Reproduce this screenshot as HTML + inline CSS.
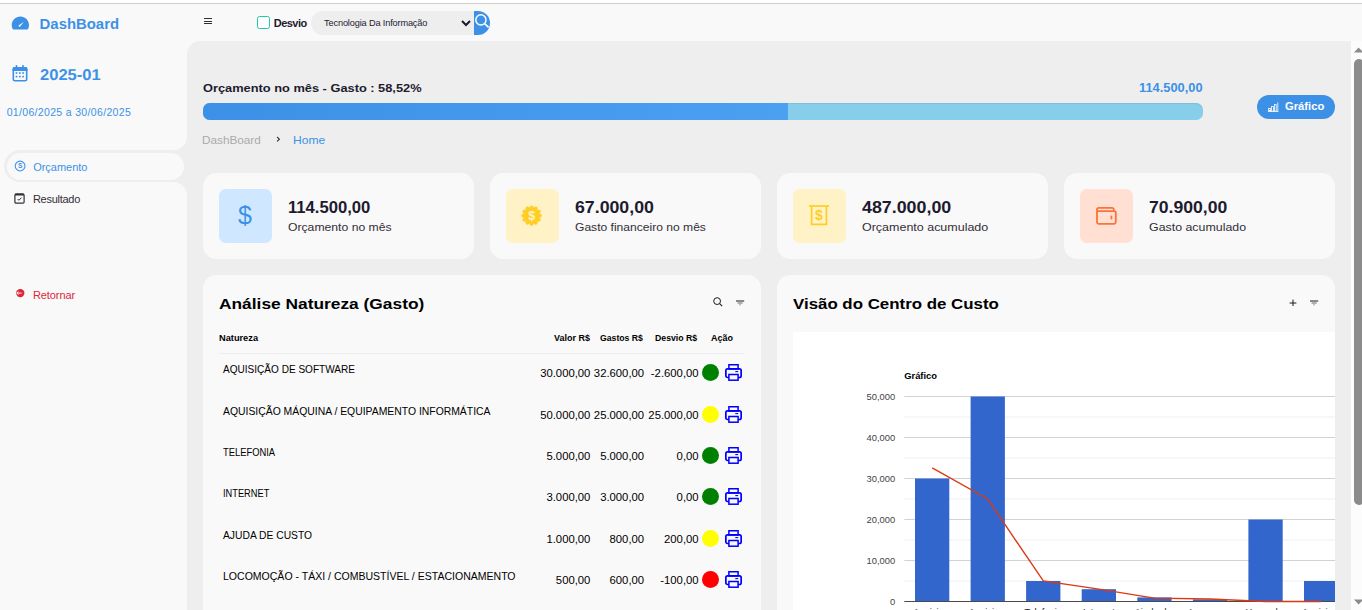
<!DOCTYPE html>
<html lang="pt-br">
<head>
<meta charset="utf-8">
<title>DashBoard</title>
<style>
*{box-sizing:border-box;margin:0;padding:0}
html,body{width:1362px;height:610px;overflow:hidden;background:#fff}
body{position:relative;font-family:"Liberation Sans",sans-serif;color:#342E37}
.a{position:absolute}
.t{position:absolute;white-space:nowrap;line-height:1;transform-origin:0 0}
.gp{text-rendering:geometricPrecision}
.card{position:absolute;background:#F9F9F9;border-radius:13.3px}
.dot{position:absolute;width:17px;height:17px;border-radius:50%}
</style>
</head>
<body>


<div class="a" style="left:0px;top:3px;width:1362px;height:1px;background:#CDCFCE;"></div>
<div class="a" style="left:0px;top:4px;width:1362px;height:606px;background:#F9F9F9;"></div>
<div class="a" style="left:187px;top:41px;width:1164px;height:569px;background:#EEEEEE;border-top-left-radius:13.3px"></div>
<div class="a" style="left:1351px;top:41px;width:11px;height:569px;background:#FCFCFC;"></div>
<svg class="a" style="left:1354px;top:47px" width="8" height="6" viewBox="0 0 8 6"><path d="M0 5.4 L4.6 0.4 L9.2 5.4 Z" fill="#8B8B8B"/></svg>
<div class="a" style="left:1354px;top:59px;width:10px;height:446px;background:#8B8B8B;border-radius:5px"></div>
<svg class="a" style="left:1354px;top:598.6px" width="8" height="6" viewBox="0 0 8 6"><path d="M0 0.6 L4.6 5.6 L9.2 0.6 Z" fill="#8B8B8B"/></svg>
<svg class="a" style="left:9.77px;top:12.54px" width="20.76" height="20.76" viewBox="0 0 24 24"><path d="M12 4C6.486 4 2 8.486 2 14a9.89 9.89 0 0 0 1.051 4.445c.17.34.516.555.895.555h16.107c.379 0 .726-.215.896-.555A9.89 9.89 0 0 0 22 14c0-5.514-4.486-10-10-10z" fill="#3C91E6"/><path d="M10.3 15.7a1 1 0 0 1 0-1.4l5.8-4.3-4.4 5.7a1 1 0 0 1-1.4 0z" fill="#F9F9F9"/></svg>
<div class="t" style="left:39.60px;top:17.00px;font-size:14.9px;color:#3C91E6;font-weight:700;">DashBoard</div>
<svg class="a" style="left:12.4px;top:65px" width="16" height="17" viewBox="0 0 16 17"><rect x="1.3" y="2.9" width="13.4" height="12.9" rx="1.6" fill="none" stroke="#3C91E6" stroke-width="1.6"/><path d="M0.5 6 V3.9 a1.8 1.8 0 0 1 1.8 -1.8 H13.7 a1.8 1.8 0 0 1 1.8 1.8 V6 Z" fill="#3C91E6"/><rect x="3.7" y="0.1" width="1.6" height="3" fill="#3C91E6"/><rect x="10.2" y="0.1" width="1.6" height="3" fill="#3C91E6"/><g fill="#3C91E6"><rect x="3.65" y="7.2" width="1.7" height="1.6"/><rect x="6.95" y="7.2" width="1.7" height="1.6"/><rect x="10.25" y="7.2" width="1.7" height="1.6"/><rect x="3.65" y="10.8" width="1.7" height="1.6"/><rect x="6.95" y="10.8" width="1.7" height="1.6"/><rect x="10.25" y="10.8" width="1.7" height="1.6"/></g></svg>
<div class="t gp" style="left:40.30px;top:68.00px;font-size:15.6px;color:#3C91E6;font-weight:700;transform:scaleX(1.06);">2025-01</div>
<div class="t" style="left:6.70px;top:107.00px;font-size:10.5px;color:#3C91E6;letter-spacing:0.33px;">01/06/2025 a 30/06/2025</div>
<div class="a" style="left:174px;top:137px;width:13px;height:13.3px;background:#EEEEEE;"></div>
<div class="a" style="left:160.4px;top:123.4px;width:26.6px;height:26.6px;background:#F9F9F9;border-radius:50%"></div>
<div class="a" style="left:174px;top:181.7px;width:13px;height:13.3px;background:#EEEEEE;"></div>
<div class="a" style="left:160.4px;top:182px;width:26.6px;height:26.6px;background:#F9F9F9;border-radius:50%"></div>
<div class="a" style="left:4px;top:150px;width:183px;height:32px;background:#EEEEEE;border-radius:16px 0 0 16px"></div>
<div class="a" style="left:6.7px;top:152.8px;width:177.6px;height:27px;background:#F9F9F9;border-radius:13.5px"></div>
<svg class="a" style="left:14px;top:160.3px" width="12" height="12" viewBox="0 0 12 12"><circle cx="6.1" cy="6" r="4.9" fill="none" stroke="#3C91E6" stroke-width="1.05"/><text x="6.1" y="8.3" font-size="6.6" font-weight="700" text-anchor="middle" fill="#3C91E6" font-family="Liberation Sans, sans-serif">S</text></svg>
<div class="t" style="left:33.20px;top:162.00px;font-size:11px;color:#3C91E6;letter-spacing:-0.02px;">Orçamento</div>
<svg class="a" style="left:14.3px;top:193px" width="11" height="11" viewBox="0 0 11 11"><rect x="0.9" y="1.2" width="9.2" height="9" rx="1.2" fill="none" stroke="#342E37" stroke-width="1.2"/><rect x="0.9" y="0.5" width="9.2" height="1.9" rx="0.7" fill="#342E37"/><path d="M3.6 6 L4.9 7.3 L7.4 4.7" fill="none" stroke="#342E37" stroke-width="1"/></svg>
<div class="t" style="left:32.90px;top:194.00px;font-size:11px;color:#342E37;letter-spacing:-0.26px;">Resultado</div>
<svg class="a" style="left:16px;top:289px" width="9" height="9" viewBox="0 0 9 9"><circle cx="4.3" cy="4.1" r="4.15" fill="#DC2838"/><path d="M0.9 4.1 H5.6 M2.5 2.6 L0.9 4.1 L2.5 5.6" stroke="#fff" stroke-width="0.9" fill="none"/></svg>
<div class="t" style="left:33.00px;top:290.00px;font-size:11px;color:#DC2838;letter-spacing:-0.1px;">Retornar</div>
<div class="a" style="left:204.4px;top:18px;width:7.9px;height:1.2px;background:#342E37;"></div>
<div class="a" style="left:204.4px;top:20.6px;width:7.9px;height:1.2px;background:#342E37;"></div>
<div class="a" style="left:204.4px;top:23.2px;width:7.9px;height:1.2px;background:#342E37;"></div>
<div class="a" style="left:257px;top:16px;width:13.2px;height:13px;background:#fff;border:1.3px solid #1fc9a1;border-radius:2.5px"></div>
<div class="t" style="left:273.80px;top:18.00px;font-size:11px;color:#1d1b2e;font-weight:700;letter-spacing:-0.54px;">Desvio</div>
<div class="a" style="left:311px;top:11px;width:163px;height:24px;background:#EEEEEE;border-radius:12px 0 0 12px"></div>
<div class="t" style="left:324.10px;top:19.00px;font-size:9.2px;color:#1d1b2e;letter-spacing:-0.15px;">Tecnologia Da Informação</div>
<svg class="a" style="left:461px;top:20px" width="10" height="7" viewBox="0 0 10 7"><path d="M1 1 L5 5 L9 1" fill="none" stroke="#1d1b2e" stroke-width="2"/></svg>
<div class="a" style="left:474px;top:11px;width:16.3px;height:24px;background:#3C91E6;border-radius:0 12px 12px 0;overflow:hidden"><svg class="a" style="left:0;top:0" width="17" height="24" viewBox="0 0 17 24"><circle cx="6.9" cy="8.9" r="5.1" fill="none" stroke="#fff" stroke-width="1.5"/><path d="M10.6 12.6 L14.6 16.4" stroke="#fff" stroke-width="1.6"/></svg></div>
<div class="t" style="left:202.90px;top:83.00px;font-size:11.5px;color:#1d1b2e;font-weight:700;transform:scaleX(1.114);">Orçamento no mês - Gasto : 58,52%</div>
<div class="t" style="left:1139.10px;top:82.00px;font-size:12px;color:#3C91E6;font-weight:700;transform:scaleX(1.07);">114.500,00</div>
<div class="a" style="left:203px;top:103px;width:1000px;height:17px;border-radius:6.7px;background:#87CEEB;overflow:hidden;box-shadow:inset 0 1px 1px rgba(0,0,0,.07)"><div style="width:585px;height:17px;background:linear-gradient(90deg,#3C91E6,#4BA0F2)"></div></div>
<div class="a" style="left:1257px;top:94.5px;width:78.3px;height:24.5px;background:#3C91E6;border-radius:12.3px"></div>
<svg class="a" style="left:1268px;top:102px" width="11" height="10" viewBox="0 0 11 10"><g fill="none" stroke="#fff" stroke-width="0.8"><rect x="0.6" y="6.4" width="1.8" height="2.8"/><rect x="3.6" y="4.6" width="1.8" height="4.6"/><rect x="6.4" y="2.6" width="1.8" height="6.6"/><path d="M9.8 0.4 V9.6 M0 9.4 H10.4"/></g></svg>
<div class="t" style="left:1285.30px;top:102.00px;font-size:10.2px;color:#fff;font-weight:700;transform:scaleX(1.1);">Gráfico</div>
<div class="t" style="left:202.30px;top:135.00px;font-size:10.6px;color:#AAAAAA;transform:scaleX(1.11);">DashBoard</div>
<svg class="a" style="left:276px;top:136.1px" width="5" height="7" viewBox="0 0 5 7"><path d="M1.1 1 L3.4 3.2 L1.1 5.4" fill="none" stroke="#342E37" stroke-width="1.1"/></svg>
<div class="t" style="left:293.00px;top:135.00px;font-size:10.6px;color:#3C91E6;transform:scaleX(1.14);">Home</div>
<div class="card" style="left:203px;top:173px;width:271px;height:86px"></div>
<div class="a" style="left:219px;top:189px;width:53.3px;height:53.5px;background:#CFE8FF;border-radius:6.7px"></div>
<div class="t" style="left:287.60px;top:200.00px;font-size:16px;color:#1d1b2e;font-weight:700;transform:scaleX(1.04);">114.500,00</div>
<div class="t" style="left:287.90px;top:222.00px;font-size:10.6px;color:#342E37;transform:scaleX(1.15);">Orçamento no mês</div>
<div class="card" style="left:490px;top:173px;width:271px;height:86px"></div>
<div class="a" style="left:506px;top:189px;width:53.3px;height:53.5px;background:#FFF2C6;border-radius:6.7px"></div>
<div class="t" style="left:574.60px;top:200.00px;font-size:16px;color:#1d1b2e;font-weight:700;transform:scaleX(1.108);">67.000,00</div>
<div class="t" style="left:574.90px;top:222.00px;font-size:10.6px;color:#342E37;transform:scaleX(1.14);">Gasto financeiro no mês</div>
<div class="card" style="left:777px;top:173px;width:271px;height:86px"></div>
<div class="a" style="left:793px;top:189px;width:53.3px;height:53.5px;background:#FFF2C6;border-radius:6.7px"></div>
<div class="t" style="left:861.60px;top:200.00px;font-size:16px;color:#1d1b2e;font-weight:700;transform:scaleX(1.114);">487.000,00</div>
<div class="t" style="left:861.90px;top:222.00px;font-size:10.6px;color:#342E37;transform:scaleX(1.178);">Orçamento acumulado</div>
<div class="card" style="left:1064px;top:173px;width:271px;height:86px"></div>
<div class="a" style="left:1080px;top:189px;width:53.3px;height:53.5px;background:#FFE0D3;border-radius:6.7px"></div>
<div class="t" style="left:1148.60px;top:200.00px;font-size:16px;color:#1d1b2e;font-weight:700;transform:scaleX(1.1);">70.900,00</div>
<div class="t" style="left:1148.90px;top:222.00px;font-size:10.6px;color:#342E37;transform:scaleX(1.169);">Gasto acumulado</div>
<div class="t" style="left:238.00px;top:203.00px;font-size:25px;color:#3C91E6;">$</div>
<svg class="a" style="left:521.4px;top:204.8px" width="21.2" height="21.2" viewBox="-11 -11 22 22"><g fill="#FFCE26"><circle r="8.6"/><circle cx="0.00" cy="-8.60" r="2"/><circle cx="4.30" cy="-7.45" r="2"/><circle cx="7.45" cy="-4.30" r="2"/><circle cx="8.60" cy="-0.00" r="2"/><circle cx="7.45" cy="4.30" r="2"/><circle cx="4.30" cy="7.45" r="2"/><circle cx="0.00" cy="8.60" r="2"/><circle cx="-4.30" cy="7.45" r="2"/><circle cx="-7.45" cy="4.30" r="2"/><circle cx="-8.60" cy="0.00" r="2"/><circle cx="-7.45" cy="-4.30" r="2"/><circle cx="-4.30" cy="-7.45" r="2"/></g><text x="0" y="4.7" font-size="13" font-weight="700" text-anchor="middle" fill="#FFF2C6" font-family="Liberation Sans, sans-serif">$</text></svg>
<svg class="a" style="left:808px;top:204px" width="22" height="22" viewBox="0 0 22 22"><g fill="none" stroke="#FFCE26" stroke-width="1.7"><path d="M1 2 H21"/><path d="M3.6 2 V20.4 H18.4 V2"/></g><text x="11" y="16.2" font-size="14" font-weight="700" text-anchor="middle" fill="#FFCE26" font-family="Liberation Sans, sans-serif">$</text></svg>
<svg class="a" style="left:1096px;top:206px" width="21" height="19" viewBox="0 0 21 19"><g fill="none" stroke="#FD7238" stroke-width="1.8"><path d="M1 3.6 V16 a1.8 1.8 0 0 0 1.8 1.8 H18 a1.8 1.8 0 0 0 1.8 -1.8 V7 a1.8 1.8 0 0 0 -1.8 -1.8 H2.6 a1.6 1.6 0 0 1 0 -3.4 H16 a1.8 1.8 0 0 1 1.8 1.8 V5"/><path d="M15.4 9.6 V13.4" stroke-width="1.8"/></g></svg>
<div class="card" style="left:203px;top:275px;width:558px;height:360px"></div>
<div class="t" style="left:219.10px;top:296.00px;font-size:15.2px;color:#000;font-weight:700;transform:scaleX(1.142);">Análise Natureza (Gasto)</div>
<svg class="a" style="left:713px;top:297px" width="10" height="10" viewBox="0 0 10 10"><circle cx="4.1" cy="4.1" r="3.4" fill="none" stroke="#1a1a1a" stroke-width="1"/><path d="M6.6 6.6 L9.2 9.1" stroke="#1a1a1a" stroke-width="1.1"/></svg>
<svg class="a" style="left:736px;top:299.5px" width="9" height="7" viewBox="0 0 9 7"><path d="M0 1 H8.2" stroke="#1a1a1a" stroke-width="1"/><path d="M1.6 3 H6.6" stroke="#555" stroke-width="0.9"/><path d="M3.4 4.8 H4.8" stroke="#777" stroke-width="0.9"/></svg>
<div class="t" style="left:218.90px;top:334.00px;font-size:8.8px;color:#000;font-weight:700;transform:scaleX(1.05);">Natureza</div>
<div class="t" style="left:553.60px;top:334.00px;font-size:8.8px;color:#000;font-weight:700;transform:scaleX(1.02);">Valor R$</div>
<div class="t" style="left:600.30px;top:334.00px;font-size:8.8px;color:#000;font-weight:700;transform:scaleX(0.985);">Gastos R$</div>
<div class="t" style="left:655.30px;top:334.00px;font-size:8.8px;color:#000;font-weight:700;transform:scaleX(0.99);">Desvio R$</div>
<div class="t" style="left:710.80px;top:334.00px;font-size:8.8px;color:#000;font-weight:700;transform:scaleX(1.02);">Ação</div>
<div class="a" style="left:219px;top:353px;width:526px;height:1px;background:#EEEEEE;"></div>
<div class="t" style="left:223.00px;top:365.00px;font-size:10.3px;color:#000;transform:scaleX(0.976);">AQUISIÇÃO DE SOFTWARE</div>
<div class="t" style="right:771.6px;top:368.00px;font-size:11.3px;color:#000">30.000,00</div>
<div class="t" style="right:717.9px;top:368.00px;font-size:11.3px;color:#000">32.600,00</div>
<div class="t" style="right:663.4px;top:368.00px;font-size:11.3px;color:#000">-2.600,00</div>
<div class="dot" style="left:702.1px;top:363.75px;background:#008000"></div>
<svg class="a" style="left:725px;top:364.00px" width="17" height="17" viewBox="0 0 17 17"><g fill="none" stroke="#0000FF"><rect x="3.9" y="0.75" width="9.2" height="4.2" stroke-width="1.5"/><rect x="0.85" y="4.9" width="15.3" height="8.6" rx="1.7" stroke-width="1.7"/><rect x="3.9" y="10.5" width="9.2" height="5.7" fill="#F9F9F9" stroke-width="1.5"/><path d="M10.3 7.6 H13.2" stroke-width="1.1"/></g></svg>
<div class="t" style="left:223.00px;top:407.00px;font-size:10.3px;color:#000;transform:scaleX(1.009);">AQUISIÇÃO MÁQUINA / EQUIPAMENTO INFORMÁTICA</div>
<div class="t" style="right:771.6px;top:410.00px;font-size:11.3px;color:#000">50.000,00</div>
<div class="t" style="right:717.9px;top:410.00px;font-size:11.3px;color:#000">25.000,00</div>
<div class="t" style="right:663.4px;top:410.00px;font-size:11.3px;color:#000">25.000,00</div>
<div class="dot" style="left:702.1px;top:405.65px;background:#FFFF00"></div>
<svg class="a" style="left:725px;top:405.90px" width="17" height="17" viewBox="0 0 17 17"><g fill="none" stroke="#0000FF"><rect x="3.9" y="0.75" width="9.2" height="4.2" stroke-width="1.5"/><rect x="0.85" y="4.9" width="15.3" height="8.6" rx="1.7" stroke-width="1.7"/><rect x="3.9" y="10.5" width="9.2" height="5.7" fill="#F9F9F9" stroke-width="1.5"/><path d="M10.3 7.6 H13.2" stroke-width="1.1"/></g></svg>
<div class="t" style="left:223.00px;top:448.00px;font-size:10.3px;color:#000;transform:scaleX(0.911);">TELEFONIA</div>
<div class="t" style="right:771.6px;top:451.00px;font-size:11.3px;color:#000">5.000,00</div>
<div class="t" style="right:717.9px;top:451.00px;font-size:11.3px;color:#000">5.000,00</div>
<div class="t" style="right:663.4px;top:451.00px;font-size:11.3px;color:#000">0,00</div>
<div class="dot" style="left:702.1px;top:446.75px;background:#008000"></div>
<svg class="a" style="left:725px;top:447.00px" width="17" height="17" viewBox="0 0 17 17"><g fill="none" stroke="#0000FF"><rect x="3.9" y="0.75" width="9.2" height="4.2" stroke-width="1.5"/><rect x="0.85" y="4.9" width="15.3" height="8.6" rx="1.7" stroke-width="1.7"/><rect x="3.9" y="10.5" width="9.2" height="5.7" fill="#F9F9F9" stroke-width="1.5"/><path d="M10.3 7.6 H13.2" stroke-width="1.1"/></g></svg>
<div class="t" style="left:223.00px;top:489.00px;font-size:10.3px;color:#000;transform:scaleX(0.9);">INTERNET</div>
<div class="t" style="right:771.6px;top:492.00px;font-size:11.3px;color:#000">3.000,00</div>
<div class="t" style="right:717.9px;top:492.00px;font-size:11.3px;color:#000">3.000,00</div>
<div class="t" style="right:663.4px;top:492.00px;font-size:11.3px;color:#000">0,00</div>
<div class="dot" style="left:702.1px;top:487.75px;background:#008000"></div>
<svg class="a" style="left:725px;top:488.00px" width="17" height="17" viewBox="0 0 17 17"><g fill="none" stroke="#0000FF"><rect x="3.9" y="0.75" width="9.2" height="4.2" stroke-width="1.5"/><rect x="0.85" y="4.9" width="15.3" height="8.6" rx="1.7" stroke-width="1.7"/><rect x="3.9" y="10.5" width="9.2" height="5.7" fill="#F9F9F9" stroke-width="1.5"/><path d="M10.3 7.6 H13.2" stroke-width="1.1"/></g></svg>
<div class="t" style="left:223.00px;top:531.00px;font-size:10.3px;color:#000;transform:scaleX(1.0);">AJUDA DE CUSTO</div>
<div class="t" style="right:771.6px;top:534.00px;font-size:11.3px;color:#000">1.000,00</div>
<div class="t" style="right:717.9px;top:534.00px;font-size:11.3px;color:#000">800,00</div>
<div class="t" style="right:663.4px;top:534.00px;font-size:11.3px;color:#000">200,00</div>
<div class="dot" style="left:702.1px;top:529.55px;background:#FFFF00"></div>
<svg class="a" style="left:725px;top:529.80px" width="17" height="17" viewBox="0 0 17 17"><g fill="none" stroke="#0000FF"><rect x="3.9" y="0.75" width="9.2" height="4.2" stroke-width="1.5"/><rect x="0.85" y="4.9" width="15.3" height="8.6" rx="1.7" stroke-width="1.7"/><rect x="3.9" y="10.5" width="9.2" height="5.7" fill="#F9F9F9" stroke-width="1.5"/><path d="M10.3 7.6 H13.2" stroke-width="1.1"/></g></svg>
<div class="t" style="left:223.00px;top:572.00px;font-size:10.3px;color:#000;transform:scaleX(1.022);">LOCOMOÇÃO - TÁXI / COMBUSTÍVEL / ESTACIONAMENTO</div>
<div class="t" style="right:771.6px;top:575.00px;font-size:11.3px;color:#000">500,00</div>
<div class="t" style="right:717.9px;top:575.00px;font-size:11.3px;color:#000">600,00</div>
<div class="t" style="right:663.4px;top:575.00px;font-size:11.3px;color:#000">-100,00</div>
<div class="dot" style="left:702.1px;top:570.55px;background:#FF0000"></div>
<svg class="a" style="left:725px;top:570.80px" width="17" height="17" viewBox="0 0 17 17"><g fill="none" stroke="#0000FF"><rect x="3.9" y="0.75" width="9.2" height="4.2" stroke-width="1.5"/><rect x="0.85" y="4.9" width="15.3" height="8.6" rx="1.7" stroke-width="1.7"/><rect x="3.9" y="10.5" width="9.2" height="5.7" fill="#F9F9F9" stroke-width="1.5"/><path d="M10.3 7.6 H13.2" stroke-width="1.1"/></g></svg>
<div class="card" style="left:777px;top:275px;width:558px;height:360px;overflow:hidden">
<div class="a" style="left:16px;top:57px;width:560px;height:300px;background:#fff">
<svg class="a" style="left:0;top:0" width="560" height="300" viewBox="0 0 560 300" font-family="Liberation Sans, sans-serif">
<rect x="111.3" y="248.5" width="460" height="1" fill="#f0f0f0"/>
<rect x="111.3" y="207.5" width="460" height="1" fill="#f0f0f0"/>
<rect x="111.3" y="166.5" width="460" height="1" fill="#f0f0f0"/>
<rect x="111.3" y="125.5" width="460" height="1" fill="#f0f0f0"/>
<rect x="111.3" y="84.5" width="460" height="1" fill="#f0f0f0"/>
<rect x="111.3" y="228.0" width="460" height="1" fill="#d2d2d2"/>
<rect x="111.3" y="187.0" width="460" height="1" fill="#d2d2d2"/>
<rect x="111.3" y="146.0" width="460" height="1" fill="#d2d2d2"/>
<rect x="111.3" y="105.0" width="460" height="1" fill="#d2d2d2"/>
<rect x="111.3" y="64.0" width="460" height="1" fill="#d2d2d2"/>
<rect x="122.0" y="146.5" width="34.3" height="123.0" fill="#3366CC"/>
<rect x="177.6" y="64.5" width="34.3" height="205.0" fill="#3366CC"/>
<rect x="233.1" y="249.0" width="34.3" height="20.5" fill="#3366CC"/>
<rect x="288.7" y="257.2" width="34.3" height="12.3" fill="#3366CC"/>
<rect x="344.3" y="265.4" width="34.3" height="4.1" fill="#3366CC"/>
<rect x="399.9" y="267.4" width="34.3" height="2.1" fill="#3366CC"/>
<rect x="455.4" y="187.5" width="34.3" height="82.0" fill="#3366CC"/>
<rect x="511.0" y="249.0" width="34.3" height="20.5" fill="#3366CC"/>
<rect x="111.3" y="269.0" width="460" height="1" fill="#4a4a4a"/>
<polyline points="139.2,135.8 194.7,167.0 250.3,249.0 305.9,257.2 361.4,266.2 417.0,267.0 472.6,269.5 528.1,269.5" fill="none" stroke="#DC3912" stroke-width="1.35"/>
<text x="102.2" y="272.8" font-size="9.4" fill="#444" text-anchor="end">0</text>
<text x="102.2" y="231.8" font-size="9.4" fill="#444" text-anchor="end">10,000</text>
<text x="102.2" y="190.8" font-size="9.4" fill="#444" text-anchor="end">20,000</text>
<text x="102.2" y="149.8" font-size="9.4" fill="#444" text-anchor="end">30,000</text>
<text x="102.2" y="108.8" font-size="9.4" fill="#444" text-anchor="end">40,000</text>
<text x="102.2" y="67.8" font-size="9.4" fill="#444" text-anchor="end">50,000</text>
<text x="111.2" y="47" font-size="9.4" font-weight="700" fill="#000">Gráfico</text>
<text x="139.2" y="282.9" font-size="9.4" fill="#222" text-anchor="middle">Aquisiç...</text>
<text x="194.7" y="282.9" font-size="9.4" fill="#222" text-anchor="middle">Aquisiç...</text>
<text x="250.3" y="282.9" font-size="9.4" fill="#222" text-anchor="middle">Telefonia</text>
<text x="305.9" y="282.9" font-size="9.4" fill="#222" text-anchor="middle">Internet</text>
<text x="361.4" y="282.9" font-size="9.4" fill="#222" text-anchor="middle">Ajuda d...</text>
<text x="417.0" y="282.9" font-size="9.4" fill="#222" text-anchor="middle">Locomo...</text>
<text x="472.6" y="282.9" font-size="9.4" fill="#222" text-anchor="middle">Hosped...</text>
<text x="528.1" y="282.9" font-size="9.4" fill="#222" text-anchor="middle">Aquisiç...</text>
</svg>

</div></div>
<div class="t" style="left:792.60px;top:296.00px;font-size:15.5px;color:#000;font-weight:700;transform:scaleX(1.088);">Visão do Centro de Custo</div>
<svg class="a" style="left:1288.5px;top:298.5px" width="8" height="8" viewBox="0 0 8 8"><path d="M4 0.6 V7 M0.6 4 H7.4" stroke="#1a1a1a" stroke-width="1"/></svg>
<svg class="a" style="left:1310px;top:299.5px" width="9" height="7" viewBox="0 0 9 7"><path d="M0 1 H8.2" stroke="#1a1a1a" stroke-width="1"/><path d="M1.6 3 H6.6" stroke="#555" stroke-width="0.9"/><path d="M3.4 4.8 H4.8" stroke="#777" stroke-width="0.9"/></svg>
</body>
</html>
